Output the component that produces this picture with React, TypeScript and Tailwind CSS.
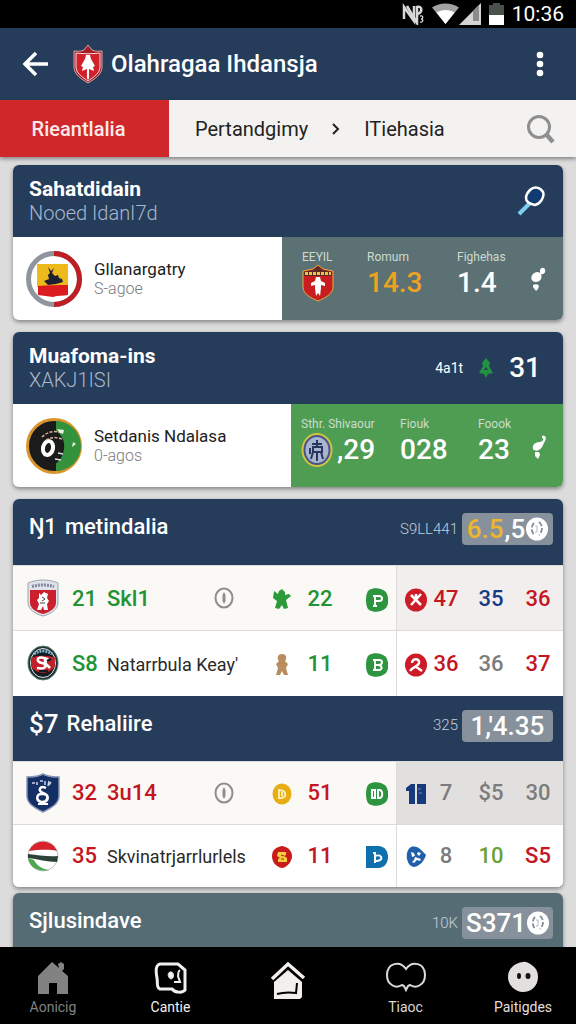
import React from 'react';
import clsx from 'clsx';

type Cell = { value: string; color: string };

type TeamRow = {
  crest: React.ReactNode;
  rank: string;
  name: string;
  accent: string;
  featured?: boolean;
  event: React.ReactNode;
  eventCount: string;
  badge: React.ReactNode;
  mark: React.ReactNode;
  scores: Cell[];
  scoreBg: string;
};

const GREEN = 'text-[#239334]';
const RED = 'text-[#c4161f]';
const GRAY = 'text-[#7c7c7c]';

/* ---------- Status bar icons ---------- */

function MutedIcon() {
  return (
    <svg width="22" height="22" viewBox="0 0 22 22" fill="none" stroke="#d8d8d8" strokeWidth="2.500">
      <path d="M2 16V4l10 14V3" />
      <path d="M5 3l10 17V4c5-2 6 5 1 7" />
      <path d="M18 13c4-1 3 3 1 3c3 0 2 4-1 3" strokeWidth="1.300" />
    </svg>
  );
}

function WifiIcon() {
  return (
    <svg width="27" height="22" viewBox="0 0 27 22">
      <path d="M0 4.500C8-1 19-1 27 4.500L13.500 21z" fill="#a2a2a2" />
      <path d="M4.500 9.500c5-3.500 13-3.500 18 0L13.500 21z" fill="#fff" />
    </svg>
  );
}

function SignalIcon() {
  return (
    <svg width="22" height="22" viewBox="0 0 22 22">
      <path d="M22 0v22H0z" fill="#d4d4d4" />
      <path d="M20 2v16h-6V8z" fill="#8c8c8c" />
    </svg>
  );
}

function BatteryIcon() {
  return (
    <svg width="15" height="22" viewBox="0 0 15 22">
      <path d="M4 0h7v2h4v10H0V2h4z" fill="#4a514b" />
      <path d="M0 12h15v10H0z" fill="#fff" />
    </svg>
  );
}

/* ---------- Crests ---------- */

function LeagueCrest() {
  return (
    <svg width="30" height="40" viewBox="0 0 30 40">
      <path d="M15 1l4 5c4 2 7 1 10 1v16c0 7-7 12-14 16C8 35 1 30 1 23V7c3 0 6 1 10-1z" fill="#a51c26" stroke="#d9a5a5" />
      <path d="M3 9c8 1 16 1 24 0v14c0 6-6 10-12 14C9 33 3 29 3 23z" fill="#d2202a" stroke="#f0dede" />
      <path d="M13 11h4l1 4 4 7-2 1 1 4-5-2v9l-1 2-1-2v-9l-5 2 1-4-2-1 4-7z" fill="#fff" />
    </svg>
  );
}

function GoldCrest() {
  return (
    <svg width="32" height="38" viewBox="0 0 32 38">
      <path d="M16 1l5 4 10 2v16c0 7-8 11-15 14C9 34 1 30 1 23V7l10-2z" fill="#c81e20" stroke="#e0b040" />
      <path d="M16 2l5 4 9 2v4H2V8l9-2z" fill="#5e2a24" />
      <path d="M3 9.500h26" stroke="#e6c646" strokeWidth="3" strokeDasharray="3 1" />
      <path d="M14 13h4l1 4 4 2v3l-4-1v3l-1 8-2-3-2 3-1-8v-3l-4 1v-3l4-2z" fill="#fff" />
    </svg>
  );
}

function BlueSeal() {
  return (
    <svg width="32" height="34" viewBox="0 0 32 34">
      <ellipse cx="16" cy="17" rx="14.500" ry="16" fill="#46568a" stroke="#d2c242" strokeWidth="2" />
      <ellipse cx="16" cy="17" rx="11.500" ry="13" fill="#a9b5d0" />
      <path d="M11 11h10M16 7v6M12 14h9v5h-9zM12 19l-2 7M16 19v9M20 19l2 7M9 15v6" stroke="#28355f" strokeWidth="2" fill="none" />
    </svg>
  );
}

function RingCrest() {
  return (
    <svg width="56" height="58" viewBox="0 0 56 58">
      <circle cx="28" cy="29" r="25.500" fill="#fff" stroke="#8f959c" strokeWidth="5" />
      <path d="M28 3.500a25.500 25.500 0 010 51" fill="none" stroke="#be1e26" strokeWidth="5" />
      <path d="M11 14h31v23H11z" fill="#eeb91b" />
      <path d="M12 36c9-1 20-1 30-1v10c-5 1-10 0-15 2-5-1-10-1-15-2z" fill="#dc1b1e" />
      <path d="M22 17l3 4 3-3-2 5 3 3 3-1 1 3 3 1 1 3-7 2-8 1-4-4 5-2-1-4 2-2z" fill="#1c2030" />
    </svg>
  );
}

function SplitCrest() {
  return (
    <svg width="56" height="58" viewBox="0 0 56 58">
      <circle cx="28" cy="29" r="26.500" fill="#1b1b1b" stroke="#d8952b" strokeWidth="3" />
      <path d="M30 4a25 25 0 010 50z" fill="#33923b" />
      <path d="M29 13c7 5 10 11 9 19-1 7-4 12-9 15z" fill="#1b1b1b" />
      <ellipse cx="22" cy="31" rx="5" ry="7" fill="none" stroke="#fff" strokeWidth="4" transform="rotate(12 22 31)" />
      <path d="M16 20c5-5 12-7 20-4M20 23c5-3 10-3 16-1" fill="none" stroke="#d8b49a" strokeWidth="1.500" strokeDasharray="3 1.500" />
      <path d="M29 42l6 1M32 36l5 1" fill="none" stroke="#ddd" strokeWidth="1.500" />
      <path d="M47 25l3 2-4 3zM31 12l7 1-1 4-4-2z" fill="#e8f3e6" />
    </svg>
  );
}

function RedWhiteCrest() {
  return (
    <svg width="32" height="38" viewBox="0 0 32 38">
      <path d="M1 4C10 0 22 0 31 4v20c0 6-7 11-15 13C8 35 1 30 1 24z" fill="#dfe2ea" stroke="#a0a4b2" />
      <path d="M3 11h26v13c0 5-6 9-13 11C9 33 3 29 3 24z" fill="#cc1f2d" />
      <path d="M5 7.500c7-2 15-2 22 0" stroke="#8289a0" strokeWidth="3" strokeDasharray="2 1" fill="none" />
      <path d="M12 14l2 2 3-3 4 2-1 4 2 3-2 3 1 6h-4l-1-4-2 4h-4l2-6-2-4 2-2z" fill="#fff" />
      <path d="M15 18l3 2-3 2M13 24h5" stroke="#444" fill="none" />
    </svg>
  );
}

function RoundCrest() {
  return (
    <svg width="32" height="36" viewBox="0 0 32 36">
      <ellipse cx="16" cy="18" rx="15" ry="17" fill="#1d3035" stroke="#54816b" />
      <ellipse cx="16" cy="18" rx="12.500" ry="14.500" fill="#161b22" stroke="#e6e6e6" />
      <path d="M4 13c6-3 18-3 24 0v8c-4 9-20 9-24 0z" fill="#c0222c" />
      <path d="M7 9c6-4 12-4 18 0" stroke="#7bb7cf" strokeWidth="3" strokeDasharray="2 1" fill="none" />
      <path d="M17 13c-8-2-8 4-2 5 6 1 5 7-5 5M21 13l-3 5 5 5M18 12v11" stroke="#fff" strokeWidth="2.500" fill="none" />
      <path d="M20 16l4-2M12 26h9" stroke="#161b22" strokeWidth="2" />
    </svg>
  );
}

function NavyCrest() {
  return (
    <svg width="34" height="40" viewBox="0 0 34 40">
      <path d="M17 1c5 3 10 3 16 3v19c0 8-8 12-16 16C9 35 1 31 1 23V4c6 0 11 0 16-3z" fill="#142f66" stroke="#8795b3" strokeWidth="1.500" />
      <path d="M6 10h3M11 9v3M14 8h3M19 8v4M23 8l-1 5M25 9l-2 3" stroke="#c7d2e6" strokeWidth="1.500" />
      <path d="M20 15c-6-3-9 3-3 5 7 2 5 10-2 9-6-2-4-9 1-8 8-1 7 8 1 8" stroke="#fff" strokeWidth="2.500" fill="none" />
      <path d="M12 31h10" stroke="#fff" strokeWidth="2" />
    </svg>
  );
}

function FlagCrest() {
  return (
    <svg width="32" height="32" viewBox="0 0 32 32">
      <circle cx="16" cy="16" r="15" fill="#fff" stroke="#b9bdb9" />
      <path d="M2 11a15 15 0 0128 0c-9-2-19-1-28 0z" fill="#d8232d" />
      <path d="M1 14c10 1 20 3 30 2l-1 6c-10 0-19-3-29-4z" fill="#2c4237" />
      <path d="M1 18c2 11 12 14 21 12-7-1-13-5-15-10z" fill="#4da84f" />
    </svg>
  );
}

/* ---------- Row icons ---------- */

function ClockIcon() {
  return (
    <svg width="20" height="22" viewBox="0 0 20 22" fill="none" stroke="#8d8d8d" strokeWidth="2">
      <ellipse cx="10" cy="11" rx="8.500" ry="9.500" />
      <path d="M10 5l1.500 3v6L10 17l-1.500-3V8z" fill="#8d8d8d" stroke="none" />
    </svg>
  );
}

function JumpIcon() {
  return (
    <svg width="18" height="24" viewBox="0 0 18 24" className="inline">
      <path d="M1 3l4 3 1-3 3-2 3 3v3l4-1 2 2-5 4 2 8-4 1-2-4-3 4-4-1 2-7-4-3z" fill="#2a9a3a" />
    </svg>
  );
}

function PersonIcon() {
  return (
    <svg width="14" height="24" viewBox="0 0 14 24" className="inline">
      <path d="M7 1c5 0 5 5 3 7l3 3-2 4 2 7H9l-2-4-2 4H1l2-7-2-4 3-3C2 6 2 1 7 1z" fill="#b98d5d" />
    </svg>
  );
}

function CoinIcon() {
  return (
    <svg width="20" height="22" viewBox="0 0 20 22" className="inline">
      <ellipse cx="10" cy="11" rx="9.500" ry="10.500" fill="#e9ad14" />
      <path d="M7 6v10M7 7c9 0 8 9 0 8M10 9v4" stroke="#fff3c4" strokeWidth="1.800" fill="none" />
    </svg>
  );
}

function RedCoinIcon() {
  return (
    <svg width="20" height="22" viewBox="0 0 20 22" className="inline">
      <path d="M10 0c6 1 10 5 10 10s-4 11-10 12C4 21 0 16 0 10S4 1 10 0z" fill="#c91a1c" />
      <path d="M6 6h8v3l-2 1 3 2v4H6v-3l2-1-3-2z" fill="#f3cf3c" />
      <path d="M9 9l3 1M9 13h3" stroke="#c91a1c" />
    </svg>
  );
}

function BadgeIcon({ fill, square, children }: { fill: string; square?: boolean; children: React.ReactNode }) {
  return (
    <svg width="22" height="24" viewBox="0 0 22 24" className="inline">
      <path
        d={square ? 'M0 1h13c12 1 12 21 0 22H0z' : 'M3 2c5-3 13-2 17 2 3 5 3 12 0 16-4 4-12 5-17 2-4-3-4-17 0-20z'}
        fill={fill}
      />
      <g fill="none" stroke="#fff" strokeWidth="2">{children}</g>
    </svg>
  );
}

function RedMark({ children }: { children: React.ReactNode }) {
  return (
    <svg width="22" height="24" viewBox="0 0 22 24" className="inline">
      <ellipse cx="11" cy="12" rx="11" ry="11.500" fill="#cb1c27" />
      <g fill="none" stroke="#fff" strokeWidth="2.500">{children}</g>
    </svg>
  );
}

function ElevenMark() {
  return (
    <svg width="20" height="22" viewBox="0 0 20 22" className="inline">
      <path d="M0 5l5-4h4v20H3V8H0zM11 1h9v20h-9z" fill="#173a7c" />
      <path d="M12 6h3M13 10h3" stroke="#6f8cbd" />
    </svg>
  );
}

function BlueMark() {
  return (
    <svg width="20" height="22" viewBox="0 0 20 22" className="inline">
      <path d="M5 1c7-2 11 4 15 8-2 6-6 11-12 12C0 20-2 5 5 1z" fill="#1f5fac" />
      <path d="M5 6l3 1 1 3-3 1zM12 6l3 1-2 3-2-2zM9 11l3 1 3 1-1 2-3-1-3 3-2-1 2-2z" fill="#fff" />
    </svg>
  );
}

function WhistleIcon({ tall }: { tall?: boolean }) {
  return (
    <svg width="16" height="26" viewBox="0 0 16 26" fill="#fff">
      {tall ? (
        <>
          <path d="M11 2c3-2 5 2 3 5l-3 6c-3 5-8 4-9 2-1-4 2-7 7-7 4-1 4-4 2-4z" />
          <path d="M4 18l4 0 1 3-2 4-3-3z" />
        </>
      ) : (
        <>
          <path d="M10 3c1-3 5-3 5 0 1 2-1 5-4 4 2 5-2 8-5 8-5 0-6-5-3-8 2-2 5-3 7-1z" />
          <path d="M3 18c2-1 5-1 6 1l-1 3-2 2-3-4z" />
        </>
      )}
    </svg>
  );
}

function RacketIcon() {
  return (
    <svg width="28" height="30" viewBox="0 0 28 30" fill="none">
      <path d="M13 17L2 28" stroke="#7ccdf0" strokeWidth="4" />
      <path d="M13 4c4-4 10-3 13 2 2 5-3 12-8 13-5-1-9-3-9-7 0-3 2-6 4-8z" fill="#123a72" stroke="#fff" strokeWidth="2.500" />
    </svg>
  );
}

function BallIcon() {
  return (
    <svg width="22" height="24" viewBox="0 0 22 24">
      <ellipse cx="11" cy="12" rx="11" ry="11.500" fill="#fff" />
      <path d="M8 6c-3 3-3 8 0 12M13 5c4 3 4 9 0 13" stroke="#858d94" strokeWidth="1.800" fill="none" strokeDasharray="5 2" />
      <path d="M9 9h2v6H9" stroke="#b4b9be" fill="none" />
    </svg>
  );
}

/* ---------- Cards ---------- */

type Stat = { label: string; value: string; color: string; width: string; icon?: React.ReactNode };

function MatchCard({
  title,
  subtitle,
  action,
  crest,
  team,
  note,
  stats,
  panel,
  tallWhistle,
}: {
  title: string;
  subtitle: string;
  action: React.ReactNode;
  crest: React.ReactNode;
  team: string;
  note: string;
  stats: Stat[];
  panel: string;
  tallWhistle?: boolean;
}) {
  return (
    <section className="rounded-md overflow-hidden bg-white shadow-[0_2px_4px_rgba(0,0,0,0.4)]">
      <div className="h-[72px] bg-[#253c5a] pl-4 pr-[18px] flex items-center justify-between">
        <div>
          <h2 className="text-[21px] leading-6 font-bold text-white">{title}</h2>
          <p className="text-[20px] leading-6 font-light text-[#a9b8cd]">{subtitle}</p>
        </div>
        {action}
      </div>
      <div className="h-[83px] flex">
        <div className="flex-1 flex items-center pl-[13px] gap-3">
          {crest}
          <div>
            <p className="text-[17px] leading-5 text-[#1d1d1d] whitespace-nowrap">{team}</p>
            <p className="text-[16px] leading-5 font-light text-[#7a7a7a]">{note}</p>
          </div>
        </div>
        <div className={clsx('flex pt-3', panel)}>
          {stats.map((s) => (
            <div key={s.label} className={s.width}>
              <p className="text-[12px] leading-4 text-[#cbdccf] whitespace-nowrap">{s.label}</p>
              <div className={clsx('h-9 flex items-center gap-1 text-[28px] font-medium', s.color)}>
                {s.icon}
                {s.value}
              </div>
            </div>
          ))}
          <div className="pt-[18px]">
            <WhistleIcon tall={tallWhistle} />
          </div>
        </div>
      </div>
    </section>
  );
}

function GroupHeader({
  title,
  note,
  children,
  className,
}: {
  title: React.ReactNode;
  note: string;
  children: React.ReactNode;
  className?: string;
}) {
  return (
    <div className={clsx('pl-4 pr-[10px] pt-[14px] flex items-start justify-between text-white', className)}>
      <h2 className="flex items-center gap-2 text-[22px] leading-7 font-medium">{title}</h2>
      <div className="flex items-center gap-1">
        <span className="text-[15px] font-light text-[#c3cedb]">{note}</span>
        <span className="h-8 w-[91px] rounded-[4px] bg-[#87919b] flex items-center justify-center gap-px text-[26px] leading-8 font-medium">
          {children}
        </span>
      </div>
    </div>
  );
}

function TeamTable({ rows, label, rowHeight }: { rows: TeamRow[]; label: string; rowHeight: string }) {
  return (
    <table aria-label={label} className="w-full table-fixed border-collapse text-[22px] font-medium">
      <colgroup>
        <col className="w-[59px]" />
        <col className="w-[35px]" />
        <col />
        <col className="w-[40px]" />
        <col className="w-[36px]" />
        <col className="w-[58px]" />
        <col className="w-[35px]" />
        <col className="w-[30px]" />
        <col className="w-[60px]" />
        <col className="w-[42px]" />
      </colgroup>
      <tbody>
        {rows.map((row) => (
          <tr
            key={row.rank}
            className={clsx(rowHeight, 'border-t border-[#dcdcdc]', row.featured ? 'bg-[#faf9f6]' : 'bg-white')}
          >
            <td>
              <div className="w-[60px] flex justify-center">{row.crest}</div>
            </td>
            <td className={row.accent}>{row.rank}</td>
            <td>
              {row.featured ? (
                <div className={clsx('flex items-center justify-between pr-7', row.accent)}>
                  {row.name}
                  <ClockIcon />
                </div>
              ) : (
                <span className="text-[18px] font-normal text-[#2a2a2a] whitespace-nowrap">{row.name}</span>
              )}
            </td>
            <td className="text-center">{row.event}</td>
            <td className={clsx('text-center', row.accent)}>{row.eventCount}</td>
            <td className="text-right pr-2">{row.badge}</td>
            <td className={clsx('text-center pl-1 border-l border-[#dcdcdc]', row.scoreBg)}>{row.mark}</td>
            <td className={clsx('text-center', row.scoreBg, row.scores[0].color)}>{row.scores[0].value}</td>
            <td className={clsx('text-center', row.scoreBg, row.scores[1].color)}>{row.scores[1].value}</td>
            <td className={clsx('text-center pr-2', row.scoreBg, row.scores[2].color)}>{row.scores[2].value}</td>
          </tr>
        ))}
      </tbody>
    </table>
  );
}

/* ---------- Data ---------- */

const firstGroup: TeamRow[] = [
  {
    crest: <RedWhiteCrest />,
    rank: '21',
    name: 'Skl1',
    accent: GREEN,
    featured: true,
    event: <JumpIcon />,
    eventCount: '22',
    badge: <BadgeIcon fill="#2d9440"><path d="M9 18V7M7 8h6c4 0 4 5 0 5H9M7 18h4" /></BadgeIcon>,
    mark: <RedMark><path d="M6 7l10 10M16 6L6 17M11 6v6" /></RedMark>,
    scores: [
      { value: '47', color: RED },
      { value: '35', color: 'text-[#173a86]' },
      { value: '36', color: RED },
    ],
    scoreBg: 'bg-[#f2eeee]',
  },
  {
    crest: <RoundCrest />,
    rank: 'S8',
    name: "Natarrbula Keay'",
    accent: GREEN,
    event: <PersonIcon />,
    eventCount: '11',
    badge: <BadgeIcon fill="#2d9440"><path d="M9 6v12M7 7h6c4 0 4 4 0 5H9M12 12c5 0 5 6-1 5H7" /></BadgeIcon>,
    mark: <RedMark><path d="M7 10c0-5 8-5 7 0-1 4-7 4-9 8M10 13l7 5" /></RedMark>,
    scores: [
      { value: '36', color: RED },
      { value: '36', color: GRAY },
      { value: '37', color: RED },
    ],
    scoreBg: 'bg-white',
  },
];

const secondGroup: TeamRow[] = [
  {
    crest: <NavyCrest />,
    rank: '32',
    name: '3u14',
    accent: RED,
    featured: true,
    event: <CoinIcon />,
    eventCount: '51',
    badge: <BadgeIcon fill="#2d9440"><path d="M6 8h3v8H6zM12 8h2c3 1 3 7 0 8h-2z" /></BadgeIcon>,
    mark: <ElevenMark />,
    scores: [
      { value: '7', color: GRAY },
      { value: '$5', color: GRAY },
      { value: '30', color: GRAY },
    ],
    scoreBg: 'bg-[#e2e0df]',
  },
  {
    crest: <FlagCrest />,
    rank: '35',
    name: 'Skvinatrjarrlurlels',
    accent: RED,
    event: <RedCoinIcon />,
    eventCount: '11',
    badge: <BadgeIcon fill="#0e71ae" square><path d="M7 8h3M9 8v10M9 11c8-3 9 6 0 5" /></BadgeIcon>,
    mark: <BlueMark />,
    scores: [
      { value: '8', color: GRAY },
      { value: '10', color: 'text-[#6aa338]' },
      { value: 'S5', color: RED },
    ],
    scoreBg: 'bg-white',
  },
];

const navItems = [
  {
    label: 'Aonicig',
    color: 'text-[#828282]',
    icon: (
      <svg width="32" height="34" viewBox="0 0 32 34" fill="currentColor">
        <path d="M15 1l7 6-1-4 3-2 3 2v5l-2 2 6 5v18H20V22h-8v11H1V15z" />
      </svg>
    ),
  },
  {
    label: 'Cantie',
    color: 'text-[#f0f0f0]',
    icon: (
      <svg width="34" height="34" viewBox="0 0 34 34" fill="none" stroke="currentColor" strokeWidth="3">
        <path d="M6 3h18l7 6v20c-2 3-10 3-13-1H6c-4-1-2-6-3-11S1 4 6 3z" />
        <path d="M16 11c4-1 5 6 1 7-3-1-4-6-1-7z" fill="currentColor" strokeWidth="1" />
        <path d="M26 9c-3 2-1 4-2 6l2 6h-6" strokeWidth="2" />
      </svg>
    ),
  },
  {
    label: '',
    color: 'text-[#f2efec]',
    icon: (
      <svg width="36" height="40" viewBox="0 0 36 40" fill="none" stroke="currentColor">
        <path d="M2 18L18 3l16 14" strokeWidth="3.500" />
        <path d="M18 9l14 12v15l-2 2H4V21z" fill="currentColor" stroke="none" />
        <path d="M7 33c7-2 12-2 19-1l1-10" stroke="#000" strokeWidth="2" />
      </svg>
    ),
  },
  {
    label: 'Tiaoc',
    color: 'text-[#dcdad8]',
    icon: (
      <svg width="42" height="32" viewBox="0 0 42 32" fill="none" stroke="currentColor" strokeWidth="2">
        <path d="M21 8C15-1 2 2 2 14c0 10 9 14 15 10l2 1 2 4 2-4 2-1c6 4 15 0 15-10C40 2 27-1 21 8z" />
      </svg>
    ),
  },
  {
    label: 'Paitigdes',
    color: 'text-[#e3dfde]',
    icon: (
      <svg width="32" height="32" viewBox="0 0 32 32">
        <path d="M16 1c4-1 7 2 10 4 4 3 5 7 5 11 0 9-7 15-15 15S1 24 1 16 7 2 16 1z" fill="currentColor" />
        <ellipse cx="12" cy="15" rx="2" ry="3" fill="#111" />
        <ellipse cx="21" cy="15" rx="2.500" ry="3" fill="#111" />
      </svg>
    ),
  },
];

export default function App() {
  return (
    <div className="h-screen flex flex-col bg-[#dcdcdd] font-[Roboto,sans-serif]">
      {/* Status bar */}
      <div className="h-7 shrink-0 bg-black flex items-center justify-end gap-1 pr-3 text-white">
        <MutedIcon />
        <span className="flex pl-1">
          <WifiIcon />
          <SignalIcon />
        </span>
        <span className="pl-1 pr-1">
          <BatteryIcon />
        </span>
        <span className="text-[21px] leading-6">10:36</span>
      </div>

      {/* Title bar */}
      <header className="h-[72px] shrink-0 bg-[#253c5a] flex items-center pl-[22px] pr-6 text-white">
        <button type="button" aria-label="Kembali">
          <svg width="28" height="26" viewBox="0 0 28 26" fill="none" stroke="currentColor" strokeWidth="3.500">
            <path d="M14 2L3 13l11 11M3 13h23" />
          </svg>
        </button>
        <span className="pl-[23px] pr-2">
          <LeagueCrest />
        </span>
        <h1 className="flex-1 text-[24px] leading-8 font-medium whitespace-nowrap">Olahragaa Ihdansja</h1>
        <button type="button" aria-label="Menu" className="w-6 flex justify-center">
          <svg width="8" height="26" viewBox="0 0 8 26" fill="currentColor">
            <circle cx="4" cy="4" r="3.300" />
            <circle cx="4" cy="13" r="3.300" />
            <circle cx="4" cy="22" r="3.300" />
          </svg>
        </button>
      </header>

      {/* Tabs */}
      <nav className="relative h-[57px] shrink-0 bg-[#f3f2f1] flex items-center shadow-[0_2px_4px_rgba(0,0,0,0.4)] text-[20px] text-[#222]">
        <button type="button" className="h-full w-[169px] pr-3 bg-[#d0282a] font-medium text-[#fbeaea]">
          Rieantlalia
        </button>
        <button type="button" className="pl-[26px]">Pertandgimy</button>
        <svg width="8" height="14" viewBox="0 0 8 14" fill="none" stroke="#222" strokeWidth="2" className="mx-6">
          <path d="M1 2l5 5-5 5" />
        </svg>
        <button type="button">ITiehasia</button>
        <button type="button" aria-label="Cari" className="ml-auto pr-[21px]">
          <svg width="29" height="30" viewBox="0 0 29 30" fill="none" stroke="#8f8f8f" strokeWidth="3">
            <circle cx="13" cy="13" r="10.500" />
            <path d="M20 20l7 8" strokeWidth="4.500" />
          </svg>
        </button>
      </nav>

      {/* Content */}
      <main className="flex-1 min-h-0 overflow-y-auto [scrollbar-width:none] px-[13px] pt-2">
        <div className="flex flex-col gap-3">
          <MatchCard
            title="Sahatdidain"
            subtitle="Nooed IdanI7d"
            action={<RacketIcon />}
            crest={<RingCrest />}
            team="Gllanargatry"
            note="S-agoe"
            panel="w-[281px] pl-5 bg-[#5b7173]"
            stats={[
              { label: 'EEYIL', value: '', color: 'text-white', width: 'w-[65px]', icon: <GoldCrest /> },
              { label: 'Romum', value: '14.3', color: 'text-[#eda224]', width: 'w-[90px]' },
              { label: 'Fighehas', value: '1.4', color: 'text-white', width: 'w-[73px]' },
            ]}
          />
          <MatchCard
            title="Muafoma-ins"
            subtitle="XAKJ1ISI"
            action={
              <div className="flex items-center text-white">
                <span className="text-[14px]">4a1t</span>
                <svg width="14" height="22" viewBox="0 0 14 22" className="mx-4">
                  <path d="M7 1l4 5-1 3 4 7-5 1-2 4-2-4-5-1 4-7-1-3z" fill="#239240" />
                  <path d="M7 10l2 3H5z" fill="#253c5a" />
                </svg>
                <span className="pr-1 text-[28px] font-medium">31</span>
              </div>
            }
            crest={<SplitCrest />}
            team="Setdanis Ndalasa"
            note="0-agos"
            panel="w-[272px] pl-[10px] bg-[#4f9c53]"
            tallWhistle
            stats={[
              { label: 'Sthr. Shivaour', value: ',29', color: 'text-white', width: 'w-[99px]', icon: <BlueSeal /> },
              { label: 'Fiouk', value: '028', color: 'text-white', width: 'w-[78px]' },
              { label: 'Foook', value: '23', color: 'text-white', width: 'w-[53px]' },
            ]}
          />

          <div className="flex flex-col gap-[6px]">
            <section className="rounded-md overflow-hidden bg-white shadow-[0_2px_4px_rgba(0,0,0,0.4)]">
              <GroupHeader
                title={
                  <>
                    <span>Ŋ1</span>
                    <span>metindalia</span>
                  </>
                }
                note="S9LL441"
                className="h-[66px] bg-[#253c5a]"
              >
                <span className="text-[#eeb62c]">6.5</span>
                <span>,5</span>
                <BallIcon />
              </GroupHeader>
              <TeamTable rows={firstGroup} label="metindalia" rowHeight="h-[65px]" />
              <GroupHeader
                title={
                  <>
                    <span className="text-[26px]">$7</span>
                    <span>Rehaliire</span>
                  </>
                }
                note="325"
                className="h-[65px] bg-[#253c5a]"
              >
                1,'4.35
              </GroupHeader>
              <TeamTable rows={secondGroup} label="Rehaliire" rowHeight="h-[63px]" />
            </section>

            <section className="rounded-md overflow-hidden shadow-[0_2px_4px_rgba(0,0,0,0.4)]">
              <GroupHeader title="Sjlusindave" note="10K" className="h-[66px] bg-[#566c75]">
                S371
                <BallIcon />
              </GroupHeader>
            </section>
          </div>
        </div>
      </main>

      {/* Bottom navigation */}
      <nav className="h-[77px] shrink-0 bg-black flex justify-between px-2">
        {navItems.map((item, i) => (
          <a
            key={i}
            href="#"
            aria-label={item.label || 'Beranda'}
            className={clsx('w-[90px] pt-[14px] flex flex-col items-center', item.color)}
          >
            <span className="h-9">{item.icon}</span>
            <span className="text-[14px] leading-5">{item.label}</span>
          </a>
        ))}
      </nav>
    </div>
  );
}
